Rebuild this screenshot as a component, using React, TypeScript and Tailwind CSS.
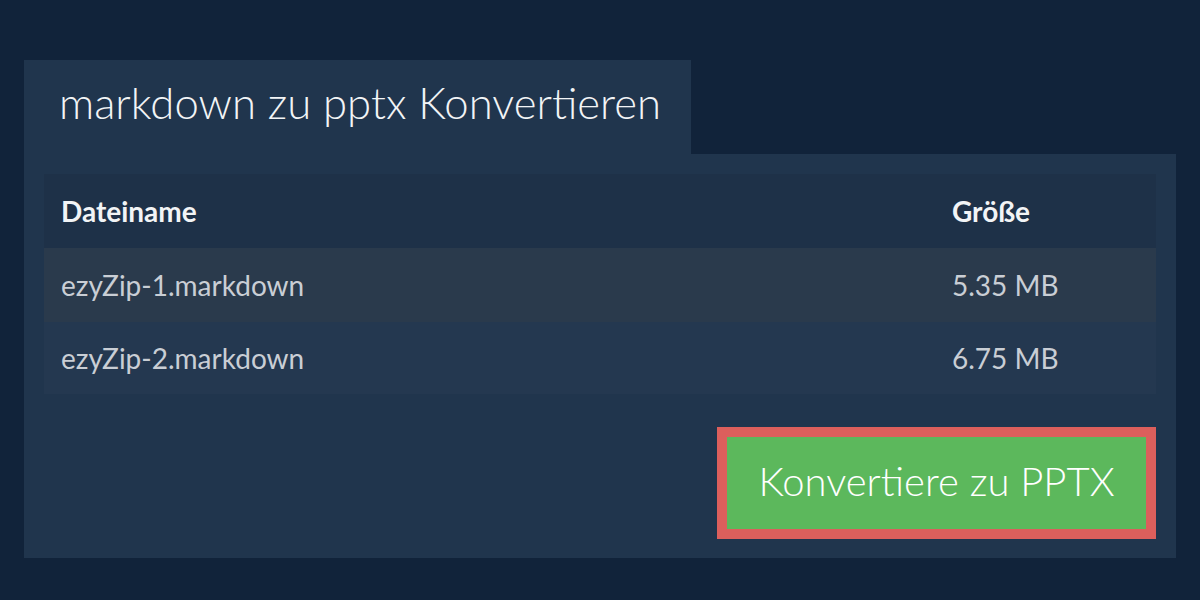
const files = [
  { name: "ezyZip-1.markdown", size: "5.35 MB" },
  { name: "ezyZip-2.markdown", size: "6.75 MB" },
];

export default function App() {
  return (
    <div
      className="w-[1200px] h-[600px] bg-[#11233a] px-[24px] pt-[60px]"
      style={{ fontFamily: "Lato, 'Open Sans', sans-serif" }}
    >
      {/* Tab title */}
      <div className="w-[667px] h-[94px] bg-[#20354d] pl-[35px] flex items-center pb-[8px]">
        <h1 className="text-[43.7px] font-light text-[#f2f4f6] leading-none">
          markdown zu pptx Konvertieren
        </h1>
      </div>

      {/* Panel */}
      <div className="bg-[#20354d] px-[20px] pt-[20px] pb-[19px]">
        <table className="w-full border-collapse">
          <thead>
            <tr className="bg-[#1e3148] h-[74px]">
              <th className="text-left pl-[17px] text-[28px] font-bold text-[#f2f4f6] leading-none">
                Dateiname
              </th>
              <th className="text-left pl-[17px] w-[221px] text-[28px] font-bold text-[#f2f4f6] leading-none">
                Größe
              </th>
            </tr>
          </thead>
          <tbody>
            {files.map((f, i) => (
              <tr
                key={f.name}
                className={i === 0 ? "bg-[#2a3a4c] h-[74px]" : "bg-[#243850] h-[72px]"}
              >
                <td className="pl-[17px] text-[28px] text-[#c9ced5] leading-none">{f.name}</td>
                <td className="pl-[17px] text-[28px] text-[#c9ced5] leading-none">{f.size}</td>
              </tr>
            ))}
          </tbody>
        </table>

        <div className="flex justify-end mt-[33px]">
          <button
            type="button"
            className="w-[439px] h-[112px] border-[10px] border-[#dc5f5c] bg-[#5cb85c] text-white text-[40px] font-light leading-none pb-[4px]"
          >
            Konvertiere zu PPTX
          </button>
        </div>
      </div>
    </div>
  );
}
